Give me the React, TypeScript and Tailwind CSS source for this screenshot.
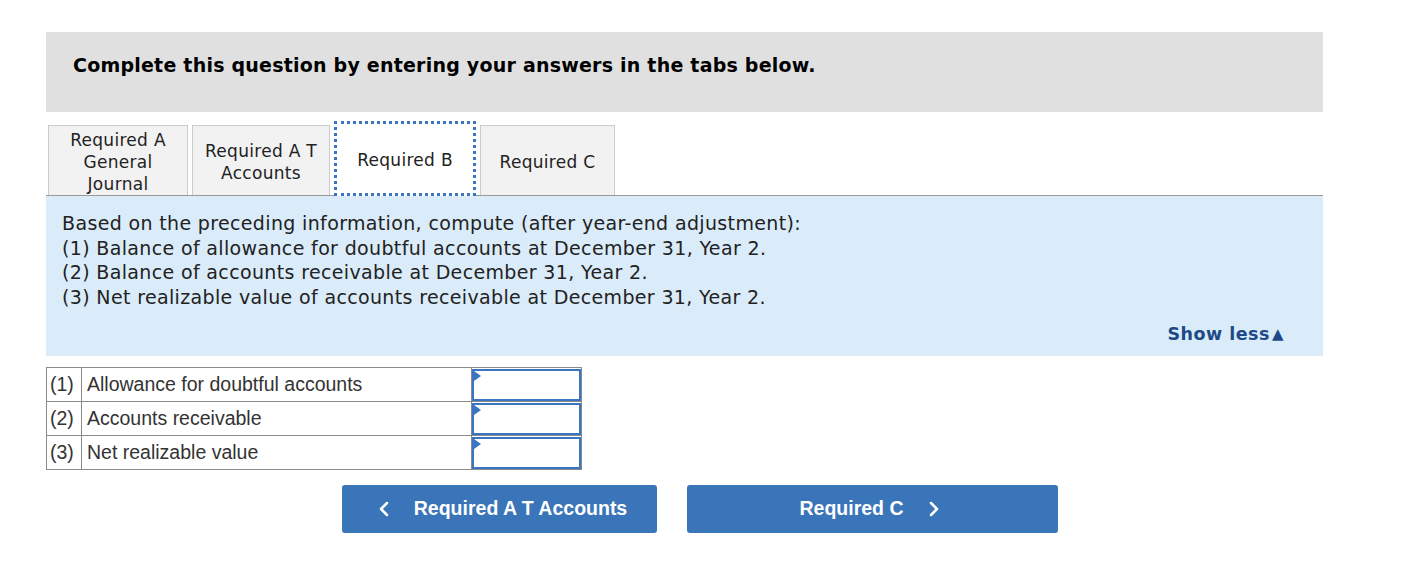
import { ChevronLeft, ChevronRight } from 'lucide-react';

const verdana = { fontFamily: '"DejaVu Sans", Verdana, sans-serif' };

function Tab({ label, active }: { label: string[]; active?: boolean }) {
  return (
    <div
      className={`flex flex-col items-center justify-center text-[17px] leading-[22px] tracking-[0.3px] text-[#222] ${
        active
          ? 'bg-white border-[3px] border-dotted border-[#3a75c4] -mb-px h-[75px] -mt-[3px] pt-[2px]'
          : 'bg-[#f2f2f2] border border-[#cccccc] border-b-0 h-[70px] pt-[2px]'
      }`}
    >
      {label.map((l) => (
        <span key={l}>{l}</span>
      ))}
    </div>
  );
}

const rows = [
  ['(1)', 'Allowance for doubtful accounts'],
  ['(2)', 'Accounts receivable'],
  ['(3)', 'Net realizable value'],
];

export default function App() {
  return (
    <div className="w-[1425px] h-[570px] bg-white pt-8 pl-[46px]" style={verdana}>
      <div className="w-[1277px] h-[80px] bg-[#e0e0e0] pl-[27px] pt-[19px]">
        <h2 className="text-[19px] font-bold text-black tracking-[0.22px]">Complete this question by entering your answers in the tabs below.</h2>
      </div>

      <div className="mt-3 flex gap-1 pl-[2px] border-b border-[#9a9a9a] w-[1277px] items-end">
        <div className="w-[140px]"><Tab label={['Required A', 'General', 'Journal']} /></div>
        <div className="w-[138px]"><Tab label={['Required A T', 'Accounts']} /></div>
        <div className="w-[142px]"><Tab label={['Required B']} active /></div>
        <div className="w-[135px]"><Tab label={['Required C']} /></div>
      </div>

      <div className="w-[1277px] h-[160px] bg-[#daebf9] px-4 pt-[15px] relative text-[19px] leading-[24.5px] tracking-[0.35px] text-[#222]">
        <p>Based on the preceding information, compute (after year-end adjustment):</p>
        <p>(1) Balance of allowance for doubtful accounts at December 31, Year 2.</p>
        <p>(2) Balance of accounts receivable at December 31, Year 2.</p>
        <p>(3) Net realizable value of accounts receivable at December 31, Year 2.</p>
        <div className="absolute right-[39px] bottom-[10px] text-[#1d4a86] font-bold text-[17.5px] tracking-[0.5px] flex items-center gap-[2px]">
          Show less<span className="text-[15px]">▲</span>
        </div>
      </div>

      <table
        className="mt-[11px] border-collapse text-[19.5px] text-[#333]"
        style={{ fontFamily: '"Liberation Sans", Arial, sans-serif' }}
      >
        <tbody>
          {rows.map(([n, t]) => (
            <tr key={n} className="h-[34px]">
              <td className="border border-[#8a8a8a] w-[35px] px-[3px]">{n}</td>
              <td className="border border-[#8a8a8a] w-[390px] px-[5px]">{t}</td>
              <td className="border border-[#8a8a8a] w-[110px] p-0">
                <div className="relative h-[32px] border-2 border-[#3a75c4] bg-white">
                  <span className="absolute left-0 top-0 w-0 h-0 border-t-[5px] border-b-[5px] border-l-[7px] border-t-transparent border-b-transparent border-l-[#3a75c4]" />
                </div>
              </td>
            </tr>
          ))}
        </tbody>
      </table>

      <div
        className="mt-[15px] flex gap-[30px] pl-[296px] text-white font-bold text-[19.5px]"
        style={{ fontFamily: '"Liberation Sans", Arial, sans-serif' }}
      >
        <button className="w-[315px] h-[48px] bg-[#3a75b9] rounded-[3px] flex items-center justify-center gap-[18px]">
          <ChevronLeft className="w-6 h-6" strokeWidth={2.5} />
          <span>Required A T Accounts</span>
        </button>
        <button className="w-[371px] h-[48px] bg-[#3a75b9] rounded-[3px] flex items-center justify-center gap-[18px]">
          <span>Required C</span>
          <ChevronRight className="w-6 h-6" strokeWidth={2.5} />
        </button>
      </div>
    </div>
  );
}
